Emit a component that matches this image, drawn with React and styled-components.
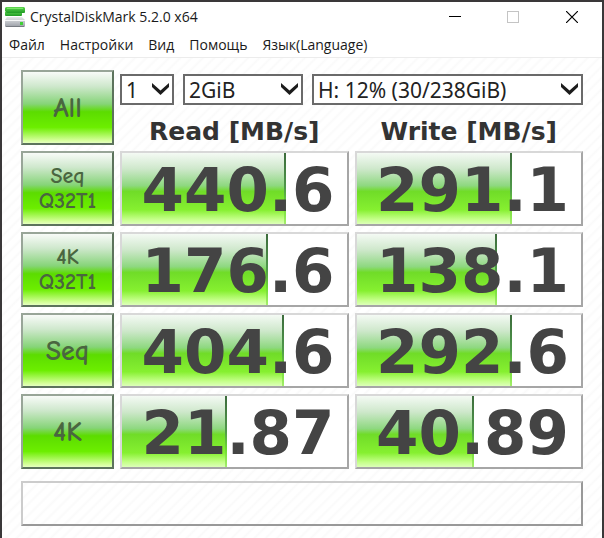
import React, { useState } from "react";
import styled, { createGlobalStyle } from "styled-components";

const GlobalStyle = createGlobalStyle`
  * {
    box-sizing: border-box;
  }
  body {
    margin: 0;
    background-color: #ffffff;
  }
`;

const Window = styled.div`
  min-height: 100vh;
  display: flex;
  flex-direction: column;
  border: 2px solid #3a3839;
  border-bottom: none;
  background-color: #ffffff;
  color: #1a1a1a;
  font-family: "Open Sans", "Noto Sans", sans-serif;
`;
const TitleBar = styled.header`
  height: 30px;
  display: flex;
  align-items: center;
  padding-left: 3px;
`;
const Title = styled.h1`
  flex: 1;
  margin: 0 0 0 4px;
  font-size: 14px;
  line-height: 20px;
  font-weight: 400;
`;
const WindowButton = styled.button`
  width: 58px;
  height: 30px;
  display: flex;
  align-items: center;
  justify-content: center;
  padding: 0;
  border: none;
  background: none;

  &:last-child {
    width: 60px;
  }
`;
const Menu = styled.nav`
  height: 26px;
  display: flex;
  align-items: center;
  gap: 15px;
  padding: 0 7px;
  border-bottom: 1px solid #ececec;
`;
const MenuItem = styled.button`
  padding: 0;
  border: none;
  background: none;
  color: inherit;
  font-family: inherit;
  font-size: 14px;
  line-height: 20px;
`;
const Content = styled.main`
  flex: 1;
  display: flex;
  flex-direction: column;
  gap: 12px;
  padding: 12px 19px;
  background: repeating-linear-gradient(
    135deg,
    #ffffff 0,
    #ffffff 4px,
    #fafafa 6px,
    #ffffff 8px
  );
`;
const Board = styled.div`
  display: grid;
  grid-template-columns: 93px 1fr 1fr;
  grid-auto-rows: 75px;
  gap: 6px;
`;
const RunButton = styled.button`
  padding: 0;
  border: 2px solid;
  border-color: #98a598 #5c735c #5c735c #98a598;
  background: linear-gradient(
    #f8fbf8 0%,
    #cfe8cd 20%,
    #86d478 45%,
    #5cdc00 56%,
    #6cee00 78%,
    #d4ff98 96%,
    #e4ffc0 100%
  );
  color: #4a6640;
  font-family: "Comic Sans MS", "Comic Neue", Lato, sans-serif;
  font-weight: 700;
  font-size: ${(props) => (props.$small ? "22px" : "28px")};
  line-height: ${(props) => (props.$small ? "25px" : "32px")};
  white-space: pre-line;
`;
const Top = styled.div`
  grid-column: span 2;
  display: flex;
  flex-direction: column;
  padding-top: 4px;
`;
const Selects = styled.div`
  display: flex;
  gap: 9px;
`;
const SelectBox = styled.div`
  flex: ${(props) => props.$flex};
  display: grid;
  align-items: center;

  > * {
    grid-area: 1 / 1;
  }
  svg {
    justify-self: end;
    margin-right: 5px;
    pointer-events: none;
  }
`;
const Select = styled.select`
  width: 100%;
  height: 31px;
  padding: 0 4px;
  appearance: none;
  border: 2px solid #6a6a6a;
  border-radius: 0;
  background-color: #ffffff;
  color: #222222;
  font-family: "Noto Sans", sans-serif;
  font-size: 21px;
`;
const Headings = styled.div`
  flex: 1;
  display: grid;
  grid-template-columns: 1fr 1fr;
  gap: 6px;
  padding-top: 12px;
`;
const Heading = styled.h2`
  margin: 0;
  color: #333333;
  font-family: Verdana, "DejaVu Sans", sans-serif;
  font-size: 25px;
  line-height: 30px;
  font-weight: 700;
  text-align: center;
`;
const Meter = styled.div`
  display: grid;
  border: 2px solid;
  border-color: #d8d8d8 #a6a6a6 #a6a6a6 #d8d8d8;
  background-color: #ffffff;

  > * {
    grid-area: 1 / 1;
  }
`;
const Fill = styled.div`
  border-right: 2px solid;
  border-image: linear-gradient(#3c6a3c, #4f9a4a 50%, #6fdc30 75%, #a8f070) 1;
  background: linear-gradient(
    #f4faf4 0%,
    #cfe8cc 22%,
    #8ed880 46%,
    #70dc28 54%,
    #86f030 80%,
    #c4ff88 93%,
    #dcffb8 100%
  );
`;
const Value = styled.div`
  padding: 3px 12px 0 0;
  color: #444444;
  font-family: Verdana, "DejaVu Sans", sans-serif;
  font-size: 61px;
  line-height: 68px;
  font-weight: 700;
  text-align: right;
`;
const Comment = styled.input`
  width: 100%;
  height: 45px;
  padding: 0 8px;
  border: 2px solid;
  border-color: #cccccc #999999 #999999 #cccccc;
  background-color: transparent;
  font-family: inherit;
  font-size: 20px;
`;

const menuItems = ["Файл", "Настройки", "Вид", "Помощь", "Язык(Language)"];

const tests = [
  { label: "Seq\nQ32T1", small: true, read: "440.6", write: "291.1" },
  { label: "4K\nQ32T1", small: true, read: "176.6", write: "138.1" },
  { label: "Seq", read: "404.6", write: "292.6" },
  { label: "4K", read: "21.87", write: "40.89" },
];

// the bars use a logarithmic scale, 20% per decade
const getPercent = (value) => 20 * Math.log10(value) + 20;

const DiskLogo = () => (
  <svg width="21" height="22" viewBox="0 0 21 22" aria-hidden="true">
    <defs>
      <linearGradient id="green" x1="0" y1="0" x2="0" y2="1">
        <stop offset="0" stopColor="#5fd850" />
        <stop offset="1" stopColor="#1f9a25" />
      </linearGradient>
      <linearGradient id="silver" x1="0" y1="0" x2="0" y2="1">
        <stop offset="0" stopColor="#e6e8ea" />
        <stop offset="1" stopColor="#9a9ea6" />
      </linearGradient>
    </defs>
    <path d="M0 6 L2 5 H16 L17 6 V9 Q17 10 16 10 H1 Q0 10 0 9 Z" fill="url(#green)" />
    <path d="M1 1 H19 L20 2 V6 Q20 7 19 7 H2 L0 5 V2 Z" fill="url(#green)" />
    <path d="M2 2.5 H18" stroke="#7ce86a" />
    <path d="M2 11 H17 L20 14 V20 Q20 21 19 21 H1 Q0 21 0 20 V14 Z" fill="url(#silver)" />
    <path d="M0 14.5 H20" stroke="#f6f7f8" />
    <path d="M1 20.5 H19" stroke="#777b82" />
    <rect x="15" y="16" width="3" height="3" fill="#3fcf35" />
  </svg>
);

const Chevron = () => (
  <svg width="17" height="13" viewBox="0 0 17 13" aria-hidden="true">
    <path d="M0 0 L8.5 7.5 L17 0 V4 L8.5 12 L0 4 Z" fill="#1c1c1c" />
  </svg>
);

const Dropdown = ({ label, flex, options }) => (
  <SelectBox $flex={flex}>
    <Select aria-label={label}>
      {options.map((option) => (
        <option key={option}>{option}</option>
      ))}
    </Select>
    <Chevron />
  </SelectBox>
);

const Result = ({ value }) => (
  <Meter>
    <Fill style={{ width: `${getPercent(value)}%` }} />
    <Value>{value}</Value>
  </Meter>
);

const App = () => {
  const [comment, setComment] = useState("");

  return (
    <>
      <GlobalStyle />
      <Window>
        <TitleBar>
          <DiskLogo />
          <Title>CrystalDiskMark 5.2.0 x64</Title>
          <WindowButton aria-label="Minimize">
            <svg width="12" height="12">
              <path d="M0 5.5 H12" stroke="#000000" />
            </svg>
          </WindowButton>
          <WindowButton aria-label="Maximize" disabled>
            <svg width="12" height="12">
              <rect x="0.5" y="0.5" width="11" height="11" fill="none" stroke="#c4c4c4" />
            </svg>
          </WindowButton>
          <WindowButton aria-label="Close">
            <svg width="12" height="12">
              <path d="M0 0 L12 12 M12 0 L0 12" stroke="#000000" strokeWidth="1.2" />
            </svg>
          </WindowButton>
        </TitleBar>
        <Menu>
          {menuItems.map((item) => (
            <MenuItem key={item}>{item}</MenuItem>
          ))}
        </Menu>
        <Content>
          <Board>
            <RunButton>All</RunButton>
            <Top>
              <Selects>
                <Dropdown label="Test count" flex="0 0 54px" options={["1", "3", "5", "9"]} />
                <Dropdown label="Test size" flex="0 0 120px" options={["2GiB", "4GiB"]} />
                <Dropdown label="Drive" flex="1" options={["H: 12% (30/238GiB)"]} />
              </Selects>
              <Headings>
                <Heading>Read [MB/s]</Heading>
                <Heading>Write [MB/s]</Heading>
              </Headings>
            </Top>
            {tests.map((test) => (
              <React.Fragment key={test.label}>
                <RunButton $small={test.small}>{test.label}</RunButton>
                <Result value={test.read} />
                <Result value={test.write} />
              </React.Fragment>
            ))}
          </Board>
          <Comment
            aria-label="Comment"
            value={comment}
            onChange={(e) => setComment(e.target.value)}
          />
        </Content>
      </Window>
    </>
  );
};

export default App;
